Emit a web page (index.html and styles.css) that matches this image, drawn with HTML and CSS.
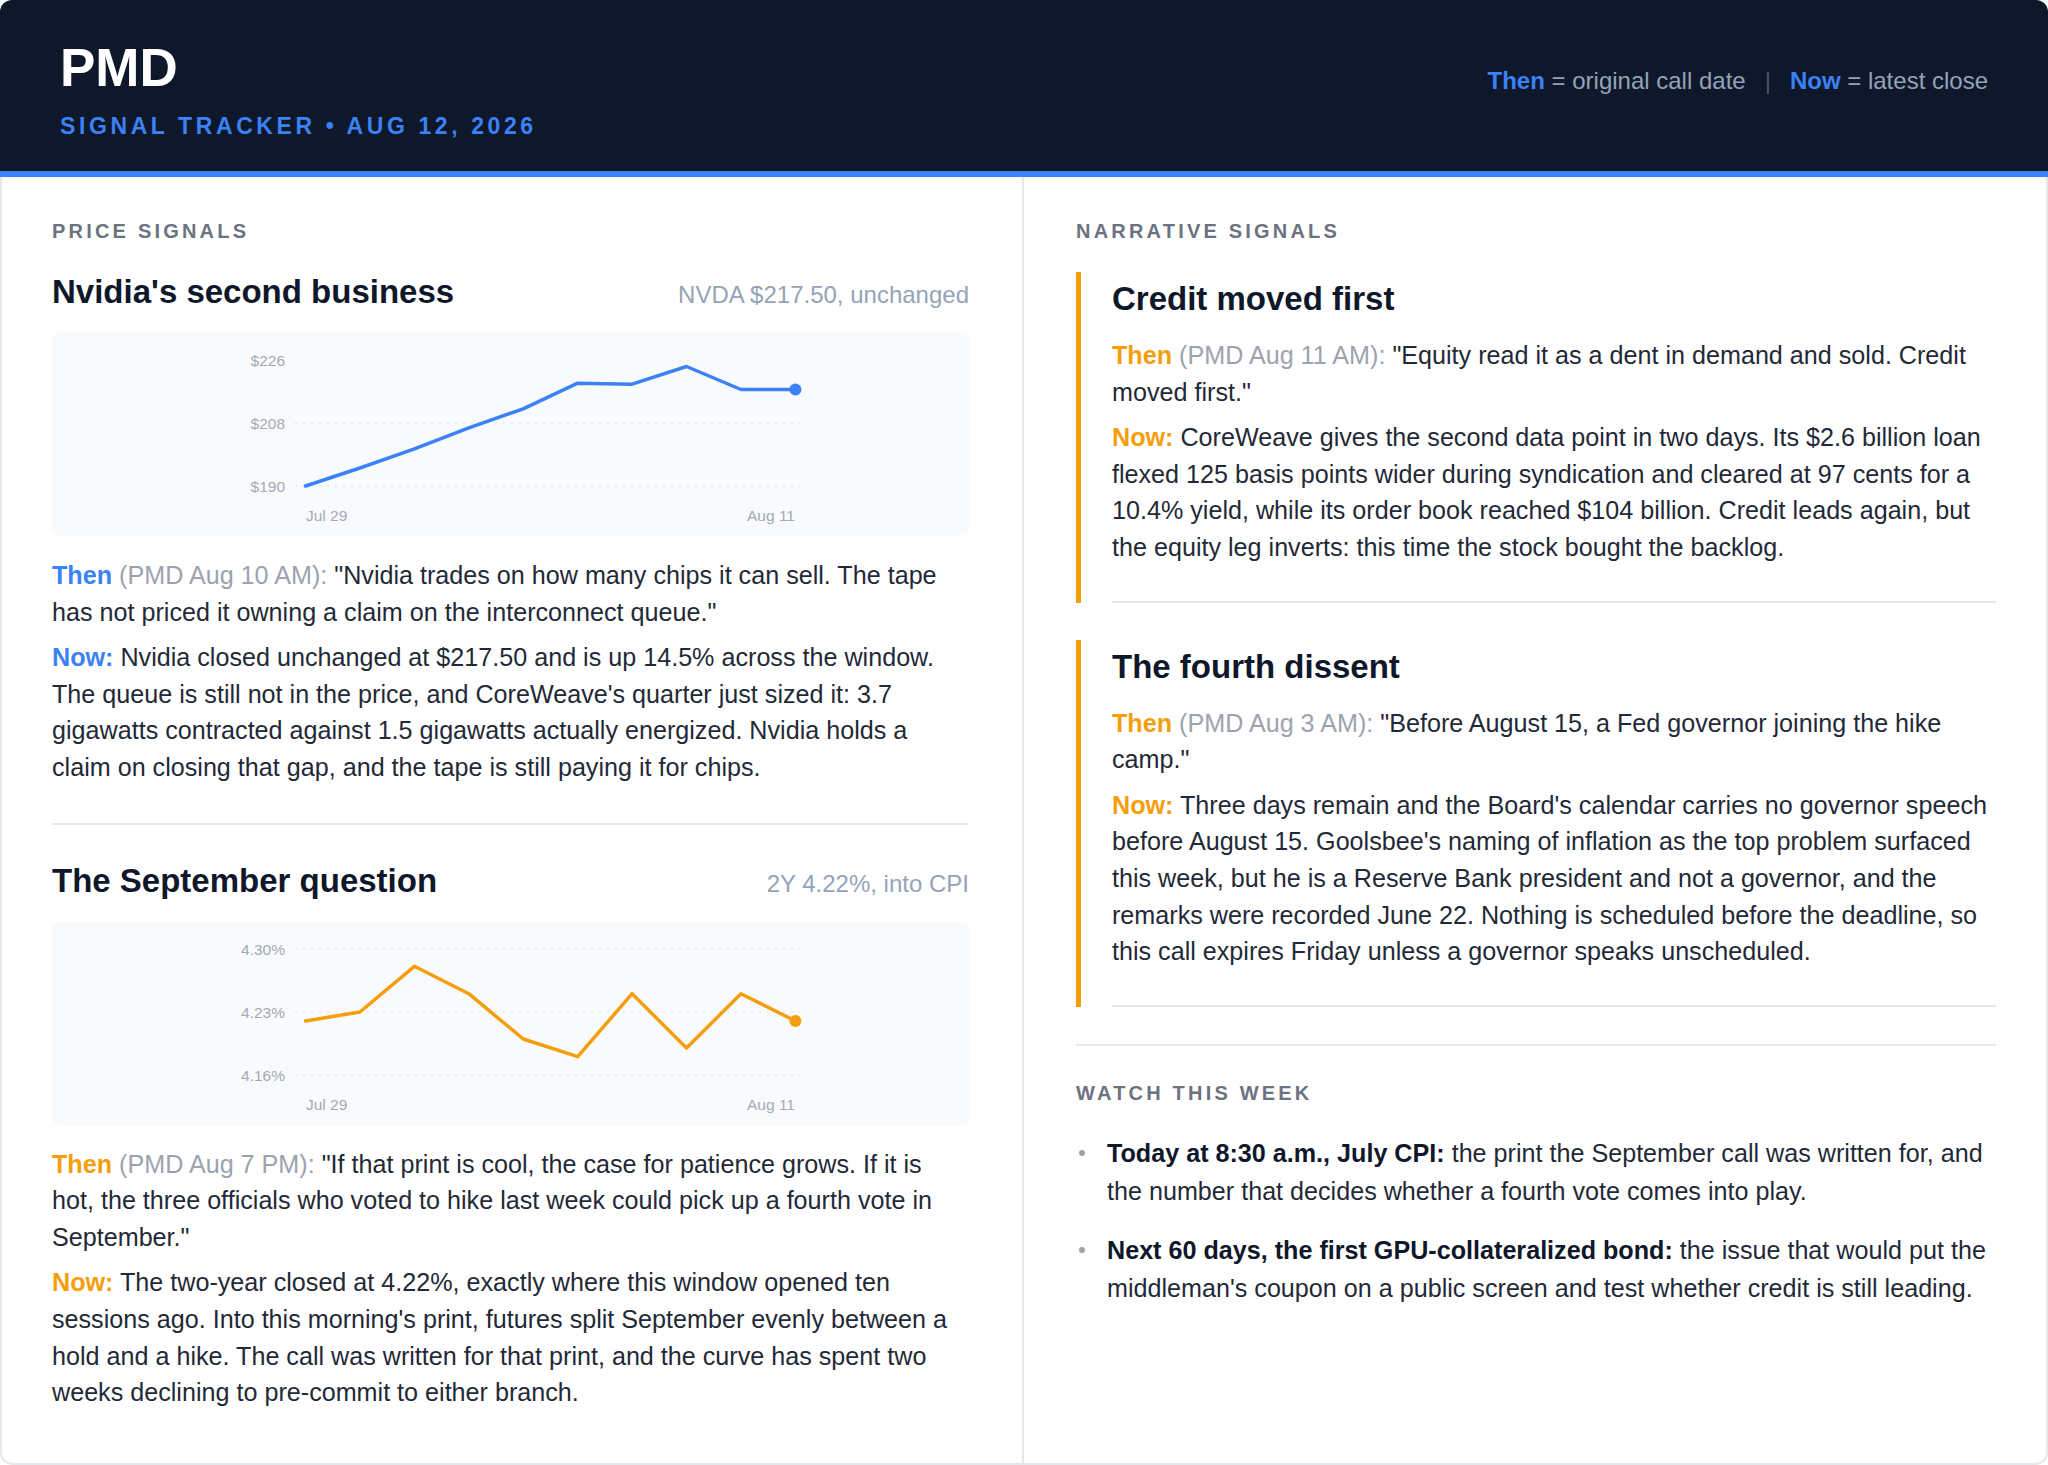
FILE: index.html
```html
<!DOCTYPE html>
<html lang="en">
<head>
<meta charset="utf-8">
<title>PMD Signal Tracker</title>
<link rel="stylesheet" href="styles.css">
</head>
<body>
<div class="page">
  <header class="top">
    <div class="brand">
      <div class="brand-title">PMD</div>
      <div class="brand-sub">SIGNAL TRACKER &bull; AUG 12, 2026</div>
    </div>
    <div class="legend">
      <b class="blue">Then</b> = original call date<span class="sep">|</span><b class="blue">Now</b> = latest close
    </div>
  </header>

  <main class="cols">
    <section class="col col-left">
      <div class="label">PRICE SIGNALS</div>

      <article class="signal">
        <div class="signal-head">
          <h2 class="title">Nvidia's second business</h2>
          <span class="meta">NVDA $217.50, unchanged</span>
        </div>
        <div class="chart">
          <svg viewBox="0 0 917 204" width="917" height="204">
            <g class="grid">
              <line x1="243" y1="28" x2="748" y2="28"/>
              <line x1="243" y1="91" x2="748" y2="91"/>
              <line x1="243" y1="154" x2="748" y2="154"/>
            </g>
            <g class="axis">
              <text x="233" y="33.5" text-anchor="end">$226</text>
              <text x="233" y="96.5" text-anchor="end">$208</text>
              <text x="233" y="159.5" text-anchor="end">$190</text>
              <text x="254" y="189">Jul 29</text>
              <text x="743" y="189" text-anchor="end">Aug 11</text>
            </g>
            <polyline class="line-blue" points="253.5,154 307.9,136 362.4,116.8 416.8,95.8 471.2,76.8 525.7,51.2 580.1,52.2 634.5,34.5 689,57.5 743.4,57.5"/>
            <circle class="dot-blue" cx="743.4" cy="57.5" r="6"/>
          </svg>
        </div>
        <p class="para"><b class="blue">Then</b> <span class="stamp">(PMD Aug 10 AM):</span> "Nvidia trades on how many chips it can sell. The tape has not priced it owning a claim on the interconnect queue."</p>
        <p class="para"><b class="blue">Now:</b> Nvidia closed unchanged at $217.50 and is up 14.5% across the window. The queue is still not in the price, and CoreWeave's quarter just sized it: 3.7 gigawatts contracted against 1.5 gigawatts actually energized. Nvidia holds a claim on closing that gap, and the tape is still paying it for chips.</p>
      </article>

      <article class="signal signal-last">
        <div class="signal-head">
          <h2 class="title">The September question</h2>
          <span class="meta">2Y 4.22%, into CPI</span>
        </div>
        <div class="chart">
          <svg viewBox="0 0 917 204" width="917" height="204">
            <g class="grid">
              <line x1="243" y1="28" x2="748" y2="28"/>
              <line x1="243" y1="91" x2="748" y2="91"/>
              <line x1="243" y1="154" x2="748" y2="154"/>
            </g>
            <g class="axis">
              <text x="233" y="33.5" text-anchor="end">4.30%</text>
              <text x="233" y="96.5" text-anchor="end">4.23%</text>
              <text x="233" y="159.5" text-anchor="end">4.16%</text>
              <text x="254" y="189">Jul 29</text>
              <text x="743" y="189" text-anchor="end">Aug 11</text>
            </g>
            <polyline class="line-orange" points="253.5,100 307.9,91 362.4,45.3 416.8,72.7 471.2,118 525.7,135.7 580.1,72.7 634.5,127 689,72.7 743.4,100"/>
            <circle class="dot-orange" cx="743.4" cy="100" r="6"/>
          </svg>
        </div>
        <p class="para"><b class="orange">Then</b> <span class="stamp">(PMD Aug 7 PM):</span> "If that print is cool, the case for patience grows. If it is hot, the three officials who voted to hike last week could pick up a fourth vote in September."</p>
        <p class="para"><b class="orange">Now:</b> The two-year closed at 4.22%, exactly where this window opened ten sessions ago. Into this morning's print, futures split September evenly between a hold and a hike. The call was written for that print, and the curve has spent two weeks declining to pre-commit to either branch.</p>
      </article>
    </section>

    <section class="col col-right">
      <div class="label">NARRATIVE SIGNALS</div>

      <article class="card">
        <div class="card-body">
          <h2 class="title title-card">Credit moved first</h2>
          <p class="para"><b class="orange">Then</b> <span class="stamp">(PMD Aug 11 AM):</span> "Equity read it as a dent in demand and sold. Credit moved first."</p>
          <p class="para"><b class="orange">Now:</b> CoreWeave gives the second data point in two days. Its $2.6 billion loan flexed 125 basis points wider during syndication and cleared at 97 cents for a 10.4% yield, while its order book reached $104 billion. Credit leads again, but the equity leg inverts: this time the stock bought the backlog.</p>
        </div>
      </article>

      <article class="card">
        <div class="card-body">
          <h2 class="title title-card">The fourth dissent</h2>
          <p class="para"><b class="orange">Then</b> <span class="stamp">(PMD Aug 3 AM):</span> "Before August 15, a Fed governor joining the hike camp."</p>
          <p class="para"><b class="orange">Now:</b> Three days remain and the Board's calendar carries no governor speech before August 15. Goolsbee's naming of inflation as the top problem surfaced this week, but he is a Reserve Bank president and not a governor, and the remarks were recorded June 22. Nothing is scheduled before the deadline, so this call expires Friday unless a governor speaks unscheduled.</p>
        </div>
      </article>

      <div class="watch">
        <div class="label">WATCH THIS WEEK</div>
        <ul class="watch-list">
          <li><span><strong>Today at 8:30 a.m., July CPI:</strong> the print the September call was written for, and the number that decides whether a fourth vote comes into play.</span></li>
          <li><span><strong>Next 60 days, the first GPU-collateralized bond:</strong> the issue that would put the middleman's coupon on a public screen and test whether credit is still leading.</span></li>
        </ul>
      </div>
    </section>
  </main>
</div>
</body>
</html>
```

FILE: styles.css
```css
* { box-sizing: border-box; }

html, body {
  margin: 0;
  padding: 0;
  background: #ffffff;
}

body {
  font-family: "Liberation Sans", Arial, Helvetica, sans-serif;
  color: #1f2937;
}

.page {
  width: 2048px;
  height: 1465px;
  border-radius: 12px;
  overflow: hidden;
  background: #ffffff;
  display: flex;
  flex-direction: column;
}

/* Header */
.top {
  height: 177px;
  flex: none;
  background: #0f172a;
  border-bottom: 6px solid #3b82f6;
  padding: 41px 60px 0 60px;
  display: flex;
  justify-content: space-between;
  align-items: flex-start;
}

.brand-title {
  font-size: 53px;
  line-height: 53px;
  font-weight: 700;
  color: #ffffff;
}

.brand-sub {
  margin-top: 19px;
  font-size: 23px;
  line-height: 27.6px;
  font-weight: 700;
  letter-spacing: 3.6px;
  color: #3b82f6;
}

.legend {
  margin-top: 25.5px;
  font-size: 24px;
  line-height: 28.8px;
  color: #94a3b8;
  white-space: nowrap;
}

.legend .sep {
  color: #475569;
  margin: 0 19px;
}

.blue { color: #3b82f6; font-weight: 700; }
.orange { color: #f59e0b; font-weight: 700; }

/* Columns */
.cols {
  flex: 1;
  display: grid;
  grid-template-columns: 1022px 1fr;
  border: 2px solid #e5e7eb;
  border-top: 0;
  border-radius: 0 0 12px 12px;
}

.col {
  padding-top: 44px;
}

.col-left {
  padding-left: 50px;
  padding-right: 53px;
  border-right: 2px solid #e5e7eb;
}

.col-right {
  padding-left: 52px;
  padding-right: 50px;
}

.label {
  font-size: 20px;
  line-height: 21px;
  font-weight: 700;
  letter-spacing: 3.2px;
  color: #6b7280;
  margin-bottom: 30px;
}

/* Price signals */
.signal {
  padding-bottom: 37px;
  border-bottom: 2px solid #e5e7eb;
  margin-bottom: 36px;
}

.signal-last {
  border-bottom: 0;
  margin-bottom: 0;
}

.signal-head {
  display: flex;
  justify-content: space-between;
  align-items: baseline;
  margin-bottom: 20px;
}

.title {
  margin: 0;
  font-size: 33px;
  line-height: 40px;
  font-weight: 700;
  color: #0f172a;
}

.meta {
  font-size: 24px;
  color: #94a3b8;
}

.chart {
  height: 204px;
  background: #f8fafc;
  border-radius: 8px;
  margin-bottom: 21px;
  overflow: hidden;
}

.chart svg {
  display: block;
}

.grid line {
  stroke: #e2e8f0;
  stroke-width: 1.5;
  stroke-dasharray: 2 6;
}

.axis text {
  font-family: "Liberation Sans", Arial, sans-serif;
  font-size: 15.5px;
  fill: #a3aab6;
}

.line-blue, .line-orange {
  fill: none;
  stroke-width: 3.5;
  stroke-linejoin: round;
  stroke-linecap: round;
}

.line-blue { stroke: #3b82f6; }
.line-orange { stroke: #f59e0b; }
.dot-blue { fill: #3b82f6; }
.dot-orange { fill: #f59e0b; }

.para {
  margin: 0;
  font-size: 25.15px;
  line-height: 36.6px;
  color: #1f2937;
}

.para + .para {
  margin-top: 9px;
}

.stamp {
  color: #9ca3af;
}

/* Narrative cards */
.card {
  border-left: 5px solid #f59e0b;
  padding-left: 31px;
  padding-top: 7px;
  margin-bottom: 37px;
}

.card-body {
  padding-bottom: 35px;
  border-bottom: 2px solid #e5e7eb;
}

.title-card {
  margin-bottom: 18px;
}

/* Watch this week */
.watch {
  border-top: 2px solid #e5e7eb;
  padding-top: 37px;
}

.watch-list {
  list-style: none;
  margin: 0;
  padding: 0;
}

.watch-list li {
  display: flex;
  align-items: flex-start;
  font-size: 25.15px;
  line-height: 38px;
  color: #1f2937;
}

.watch-list li + li {
  margin-top: 21px;
}

.watch-list li::before {
  content: "";
  flex: none;
  width: 6px;
  height: 6px;
  border-radius: 50%;
  background: #9ca3af;
  margin: 16px 22px 0 3px;
}

.watch-list strong {
  color: #0f172a;
  font-weight: 700;
}
```
